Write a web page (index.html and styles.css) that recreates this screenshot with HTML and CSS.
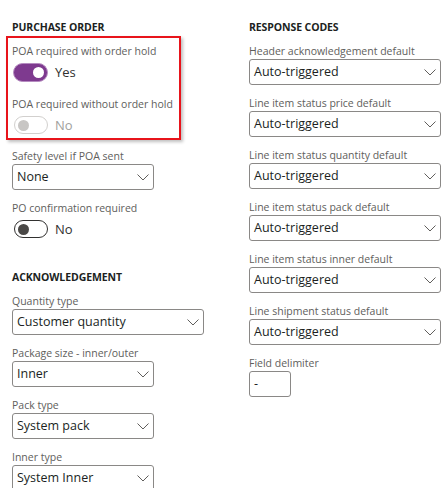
FILE: index.html
```html
<!DOCTYPE html>
<html lang="en">
<head>
<meta charset="utf-8">
<title>Purchase order settings</title>
<link rel="stylesheet" href="styles.css">
</head>
<body>
<div class="page">
  <section class="col">
    <h2 class="heading">PURCHASE ORDER</h2>
    <div class="highlight">
      <div class="field">
        <label class="label">POA required with order hold</label>
        <div class="toggle-row">
          <span class="toggle on"><span class="thumb"></span></span>
          <span class="toggle-text">Yes</span>
        </div>
      </div>
      <div class="field gap-toggle">
        <label class="label">POA required without order hold</label>
        <div class="toggle-row">
          <span class="toggle disabled"><span class="thumb"></span></span>
          <span class="toggle-text muted">No</span>
        </div>
      </div>
    </div>
    <div class="field after-box">
      <label class="label">Safety level if POA sent</label>
      <div class="select narrow"><span class="value">None</span><svg class="chev" viewBox="0 0 12 7"><path d="M0.5 0.5 L6 6 L11.5 0.5"/></svg></div>
    </div>
    <div class="field">
      <label class="label">PO confirmation required</label>
      <div class="toggle-row">
        <span class="toggle off"><span class="thumb"></span></span>
        <span class="toggle-text">No</span>
      </div>
    </div>

    <h2 class="heading section2">ACKNOWLEDGEMENT</h2>
    <div class="field first">
      <label class="label">Quantity type</label>
      <div class="select wide"><span class="value">Customer quantity</span><svg class="chev" viewBox="0 0 12 7"><path d="M0.5 0.5 L6 6 L11.5 0.5"/></svg></div>
    </div>
    <div class="field">
      <label class="label">Package size - inner/outer</label>
      <div class="select narrow"><span class="value">Inner</span><svg class="chev" viewBox="0 0 12 7"><path d="M0.5 0.5 L6 6 L11.5 0.5"/></svg></div>
    </div>
    <div class="field">
      <label class="label">Pack type</label>
      <div class="select narrow"><span class="value">System pack</span><svg class="chev" viewBox="0 0 12 7"><path d="M0.5 0.5 L6 6 L11.5 0.5"/></svg></div>
    </div>
    <div class="field">
      <label class="label">Inner type</label>
      <div class="select narrow"><span class="value">System Inner</span><svg class="chev" viewBox="0 0 12 7"><path d="M0.5 0.5 L6 6 L11.5 0.5"/></svg></div>
    </div>
  </section>

  <section class="col">
    <h2 class="heading">RESPONSE CODES</h2>
    <div class="field first">
      <label class="label">Header acknowledgement default</label>
      <div class="select wide"><span class="value">Auto-triggered</span><svg class="chev" viewBox="0 0 12 7"><path d="M0.5 0.5 L6 6 L11.5 0.5"/></svg></div>
    </div>
    <div class="field">
      <label class="label">Line item status price default</label>
      <div class="select wide"><span class="value">Auto-triggered</span><svg class="chev" viewBox="0 0 12 7"><path d="M0.5 0.5 L6 6 L11.5 0.5"/></svg></div>
    </div>
    <div class="field">
      <label class="label">Line item status quantity default</label>
      <div class="select wide"><span class="value">Auto-triggered</span><svg class="chev" viewBox="0 0 12 7"><path d="M0.5 0.5 L6 6 L11.5 0.5"/></svg></div>
    </div>
    <div class="field">
      <label class="label">Line item status pack default</label>
      <div class="select wide"><span class="value">Auto-triggered</span><svg class="chev" viewBox="0 0 12 7"><path d="M0.5 0.5 L6 6 L11.5 0.5"/></svg></div>
    </div>
    <div class="field">
      <label class="label">Line item status inner default</label>
      <div class="select wide"><span class="value">Auto-triggered</span><svg class="chev" viewBox="0 0 12 7"><path d="M0.5 0.5 L6 6 L11.5 0.5"/></svg></div>
    </div>
    <div class="field">
      <label class="label">Line shipment status default</label>
      <div class="select wide"><span class="value">Auto-triggered</span><svg class="chev" viewBox="0 0 12 7"><path d="M0.5 0.5 L6 6 L11.5 0.5"/></svg></div>
    </div>
    <div class="field">
      <label class="label">Field delimiter</label>
      <div class="textbox"><span class="value">-</span></div>
    </div>
  </section>
</div>
</body>
</html>
```
FILE: styles.css
```css
* { box-sizing: border-box; }
html, body { margin: 0; padding: 0; background: #fff; }
body {
  font-family: "Open Sans", "Noto Sans", sans-serif;
  color: #323130;
  overflow: hidden;
  height: 488px;
}
.page {
  display: grid;
  grid-template-columns: 237px 1fr;
  padding: 19px 0 0 12px;
}
.col { display: flex; flex-direction: column; align-items: flex-start; }
.heading {
  margin: 0;
  font-size: 10.5px;
  line-height: 16px;
  font-weight: 700;
  color: #201f1e;
  letter-spacing: -0.1px;
}
.section2 { margin-top: 30px; }
.highlight {
  margin: 1px 0 0 -6px;
  width: 175px;
  border: 2px solid #e8141b;
  padding: 5px 4px 3px 4px;
  box-shadow: 2px 2px 3px rgba(0,0,0,0.25);
}
.field { display: flex; flex-direction: column; align-items: flex-start; margin-top: 10px; }
.highlight .field:first-child { margin-top: 0; }
.gap-toggle { margin-top: 14px; }
.after-box { margin-top: 8px; }
.field.first { margin-top: 8px; }
.label {
  font-size: 10.5px;
  line-height: 16px;
  color: #605e5c;
  white-space: nowrap;
}
.toggle-row { display: flex; align-items: center; height: 20px; margin-top: 3px; }
.toggle {
  width: 35px; height: 19px;
  border-radius: 10px;
  border: 1px solid #323130;
  display: flex; align-items: center;
  padding: 0 3px;
  margin-left: 1px;
}
.thumb { width: 11px; height: 11px; border-radius: 50%; background: #4a4846; }
.toggle.on {
  background: #7e3a8f;
  border-color: #b58bc0;
  box-shadow: inset 0 0 0 1px #7e3a8f;
  justify-content: flex-end;
}
.toggle.on .thumb { background: #fff; }
.toggle.disabled { border-color: #d2d0ce; margin-left: 2px; width: 34px; height: 18px; }
.toggle.disabled .thumb { background: #c8c6c4; }
.toggle.off { margin-left: 2px; width: 34px; height: 18px; }
.toggle-text { margin-left: 7px; font-size: 13px; line-height: 18px; color: #323130; }
.toggle-text.muted { color: #a19f9d; }
.select {
  height: 26px;
  border: 1px solid #8a8886;
  border-radius: 3px;
  display: flex; align-items: center; justify-content: space-between;
  padding: 0 4px 0 4px;
}
.narrow { width: 142px; }
.wide { width: 192px; }
.value { font-size: 12.5px; line-height: 18px; color: #201f1e; }
.chev { width: 12px; height: 7px; fill: none; stroke: #605e5c; stroke-width: 1; }
.textbox {
  width: 42px; height: 26px;
  border: 1px solid #8a8886;
  border-radius: 3px;
  display: flex; align-items: center;
  padding: 0 4px;
}
```
